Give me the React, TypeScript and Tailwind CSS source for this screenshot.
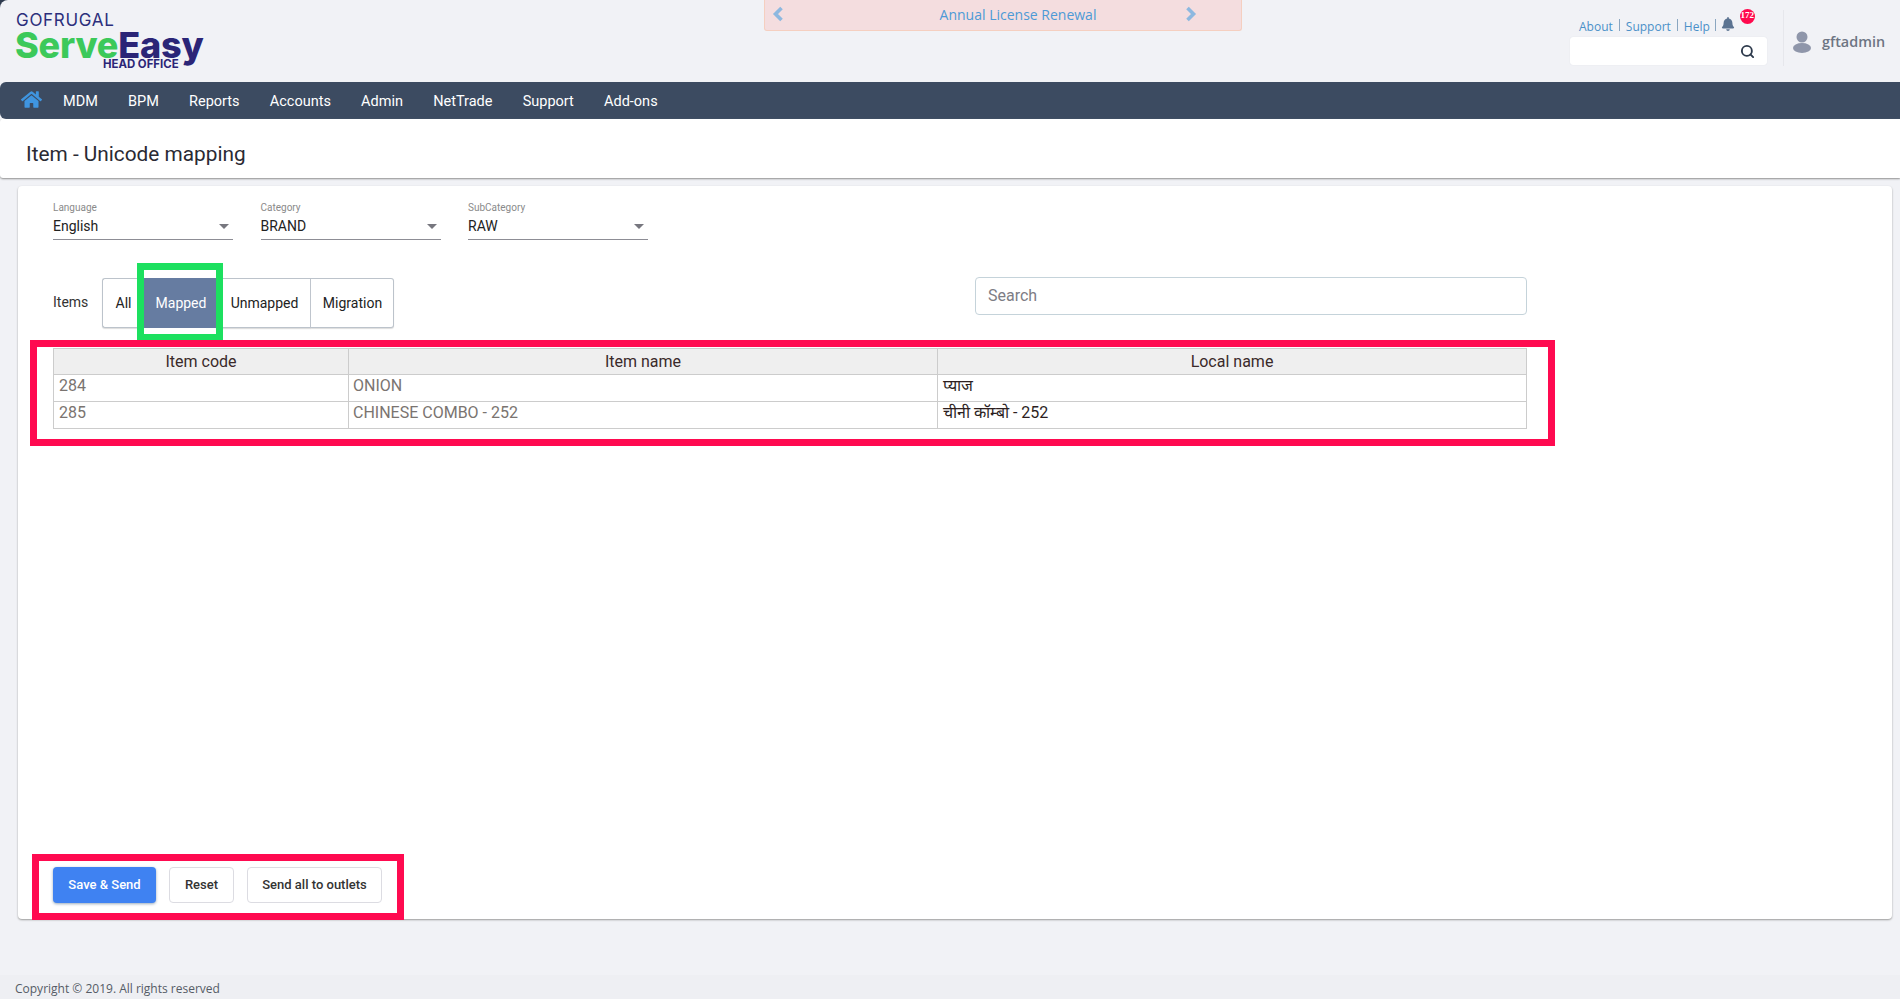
import { FaBell, FaHome } from 'react-icons/fa';
import { Search } from 'lucide-react';

const MENU = ['MDM', 'BPM', 'Reports', 'Accounts', 'Admin', 'NetTrade', 'Support', 'Add-ons'];

const ROWS = [
  { code: '284', name: 'ONION', local: 'प्याज' },
  { code: '285', name: 'CHINESE COMBO - 252', local: 'चीनी कॉम्बो - 252' },
];

function Logo() {
  return (
    <div className="flex flex-col pl-[15px] pt-[12px] font-['Inter',sans-serif] select-none">
      <div className="h-[16px] pl-[1px] text-[17px] leading-[16px] tracking-[0.7px] text-[#2c2f7c]">GOFRUGAL</div>
      <div className="mt-[2px] flex h-[31px] items-center text-[36px] font-extrabold leading-[31px] tracking-[-0.2px]">
        <span className="text-[#3cc95a]">Serve</span>
        <span className="text-[#2b2577]">Easy</span>
      </div>
      <div className="-mt-[2px] pl-[88px] text-[11.4px] font-bold leading-[10px] text-[#2b2577]">HEAD OFFICE</div>
    </div>
  );
}

function Chevron({ flip }: { flip?: boolean }) {
  return (
    <svg width="12" height="16" viewBox="0 0 12 16" fill="none" className={flip ? '-mt-[3px] rotate-180' : '-mt-[3px]'}>
      <path d="M9.5 2 L3.5 8 L9.5 14" stroke="#8db8e0" strokeWidth="3.6" />
    </svg>
  );
}

function Header() {
  return (
    <header className="flex h-[82px] shrink-0">
      <div className="w-[764px]">
        <Logo />
      </div>
      <div className="flex h-[31px] w-[478px] items-center justify-between rounded-b-[3px] border border-t-0 border-[#f5cfc0] bg-[#f4dddf] pl-[7px] pr-[44px] font-['Open_Sans',sans-serif] text-[14px] text-[#4d9ad6]">
        <Chevron />
        <span className="-mt-[1px] pl-[67px]">Annual License Renewal</span>
        <Chevron flip />
      </div>
      <div className="ml-[328px] w-[197px] pt-[10px] font-['Open_Sans',sans-serif]">
        <div className="flex h-[27px] items-center pl-[9px] text-[12px] text-[#4a90c8]">
          <span className="pt-[6px]">About</span>
          <span className="mx-[6px] mt-[2px] h-[12px] w-px bg-[#8aa6c0]" />
          <span className="pt-[6px]">Support</span>
          <span className="mx-[6px] mt-[2px] h-[12px] w-px bg-[#8aa6c0]" />
          <span className="pt-[6px]">Help</span>
          <span className="mx-[5px] mt-[2px] h-[12px] w-px bg-[#8aa6c0]" />
          <span className="relative">
            <FaBell className="h-[14px] w-[14px] text-[#5b7391]" />
            <span className="absolute -right-[20px] -top-[8px] flex h-[15px] w-[15px] items-center justify-center overflow-hidden rounded-full bg-[#ff0a4e] font-['Liberation_Serif',serif] text-[9px] font-bold text-white">
              172
            </span>
          </span>
        </div>
        <div className="flex h-[28px] items-center justify-end rounded-[3px] bg-white pr-[12px] shadow-[0_0_1px_#d5d8e0]">
          <Search className="h-[15px] w-[15px] text-[#2d3a4c]" strokeWidth={3} />
        </div>
      </div>
      <div className="ml-[16px] mt-[10px] flex h-[56px] items-center gap-[11px] border-l border-[#e6e7ec] pl-[9px] pt-[8px] font-['Open_Sans',sans-serif] text-[14.4px] font-semibold text-[#6d7583]">
        <svg width="18" height="22" viewBox="0 0 18 22" className="text-[#8f96aa]" fill="currentColor">
          <circle cx="9" cy="6" r="5.5" />
          <ellipse cx="9" cy="17" rx="9" ry="5" />
        </svg>
        <span>gftadmin</span>
      </div>
    </header>
  );
}

function NavBar() {
  return (
    <nav className="flex h-[37px] shrink-0 items-center rounded-l-[6px] bg-[#3c4b61] pl-[21px] font-['Roboto',sans-serif] text-[14.5px] text-white">
      <FaHome className="-mt-[2px] mr-[21px] h-[21px] w-[21px] text-[#3f95e0]" />
      <ul className="flex gap-[30.2px] pt-[2px]">
        {MENU.map((m) => (
          <li key={m}>{m}</li>
        ))}
      </ul>
    </nav>
  );
}

function Picker({ label, value }: { label: string; value: string }) {
  return (
    <div className="w-[180px]">
      <div className="h-[13px] text-[10px] leading-[12px] text-[#8a8a8a]">{label}</div>
      <div className="flex h-[25px] items-center justify-between border-b border-[#8d8d95] pb-[2px] pr-[4px] text-[14px] text-[#222]">
        <span>{value}</span>
        <span className="h-0 w-0 border-x-[5px] border-t-[5px] border-x-transparent border-t-[#77777f]" />
      </div>
    </div>
  );
}

function Tabs() {
  return (
    <div className="flex h-[50px] items-center">
      <span className="w-[49px] -translate-y-[1px] text-[14px] text-[#333]">Items</span>
      <div className="flex h-[50px] text-[14px] text-[#222]">
        <button className="w-[42px] rounded-l-[3px] border border-r-0 border-[#bcc3cb] bg-white shadow-[0_1px_1px_#ddd]">All</button>
        <div className="relative">
          <button className="h-[50px] w-[72px] bg-[#667ca1] pl-[2px] text-white">Mapped</button>
          <div className="absolute -bottom-[13px] -left-[7px] -right-[7px] -top-[15px] border-[7px] border-[#1ce05f]" />
        </div>
        <button className="w-[95px] border-y border-r border-[#bcc3cb] bg-white pl-[3px] shadow-[0_1px_1px_#ddd]">Unmapped</button>
        <button className="w-[83px] rounded-r-[3px] border-y border-r border-[#bcc3cb] bg-white pl-[1px] shadow-[0_1px_1px_#ddd]">Migration</button>
      </div>
    </div>
  );
}

function MappingTable() {
  return (
    <div className="relative mt-[20px] w-[1474px]">
      <table className="w-full table-fixed border-collapse text-[16px]">
        <colgroup>
          <col className="w-[295px]" />
          <col className="w-[589px]" />
          <col />
        </colgroup>
        <thead>
          <tr className="h-[26px] bg-[#efefef] text-[#3a2a2a]">
            <th className="border border-[#cccccc] font-normal">Item code</th>
            <th className="border border-[#cccccc] font-normal">Item name</th>
            <th className="border border-[#cccccc] font-normal">Local name</th>
          </tr>
        </thead>
        <tbody>
          {ROWS.map((r) => (
            <tr key={r.code} className="h-[27px]">
              <td className="border border-[#cccccc] px-[5px] pb-[4px] leading-[22px] text-[#7a7470]">{r.code}</td>
              <td className="border border-[#cccccc] px-[4px] pb-[4px] leading-[22px] text-[#7a7470]">{r.name}</td>
              <td className="border border-[#cccccc] px-[5px] pb-[4px] leading-[22px] text-[#2d1f1f]">{r.local}</td>
            </tr>
          ))}
        </tbody>
      </table>
      <div className="absolute -bottom-[17px] -left-[23px] -right-[28px] -top-[8px] border-[7px] border-[#ff0a50]" />
    </div>
  );
}

function Actions() {
  return (
    <div className="relative mb-[16px] mt-auto flex w-fit gap-[13px] font-['Roboto',sans-serif] text-[13px] font-medium">
      <button className="h-[36px] w-[103px] rounded-[4px] bg-[#3f82f2] text-white shadow-[0_1px_3px_#9ab]">Save &amp; Send</button>
      <button className="h-[36px] w-[65px] rounded-[4px] border border-[#dcdce2] bg-white text-[#333]">Reset</button>
      <button className="h-[36px] w-[135px] rounded-[4px] border border-[#dcdce2] bg-white text-[#333]">Send all to outlets</button>
      <div className="absolute -bottom-[17px] -left-[21px] -right-[22px] -top-[13px] border-[7px] border-[#ff0a50]" />
    </div>
  );
}

export default function App() {
  return (
    <div className="h-[999px] overflow-hidden bg-[#2f3b4f] font-['Roboto',sans-serif]">
      <div className="flex h-full flex-col rounded-l-[8px] bg-[#f1f2f6]">
        <Header />
        <NavBar />
        <div className="flex h-[59px] shrink-0 items-center rounded-l-[3px] bg-white pl-[26px] pt-[12px] text-[20.8px] text-[#2a2a33] shadow-[0_1px_2px_#8f8f8f]">
          Item - Unicode mapping
        </div>
        <main className="ml-[18px] mt-[8px] flex h-[733px] w-[1874px] shrink-0 flex-col rounded-[4px] bg-white pl-[35px] pt-[16px] shadow-[0_1px_2px_#9a9a9a]">
          <div className="flex gap-[27.5px]">
            <Picker label="Language" value="English" />
            <Picker label="Category" value="BRAND" />
            <Picker label="SubCategory" value="RAW" />
          </div>
          <div className="mt-[38px] flex w-[1474px] items-center justify-between">
            <Tabs />
            <div className="-mt-[15px] flex h-[38px] w-[552px] items-center rounded-[4px] border border-[#c5d3da] pl-[12px] text-[16px] text-[#7d7d85]">
              Search
            </div>
          </div>
          <MappingTable />
          <Actions />
        </main>
        <footer className="mt-auto flex h-[24px] items-center bg-[#eeeff3] pl-[15px] pt-[4px] font-['Open_Sans',sans-serif] text-[12px] text-[#555c66]">
          Copyright © 2019. All rights reserved
        </footer>
      </div>
    </div>
  );
}
